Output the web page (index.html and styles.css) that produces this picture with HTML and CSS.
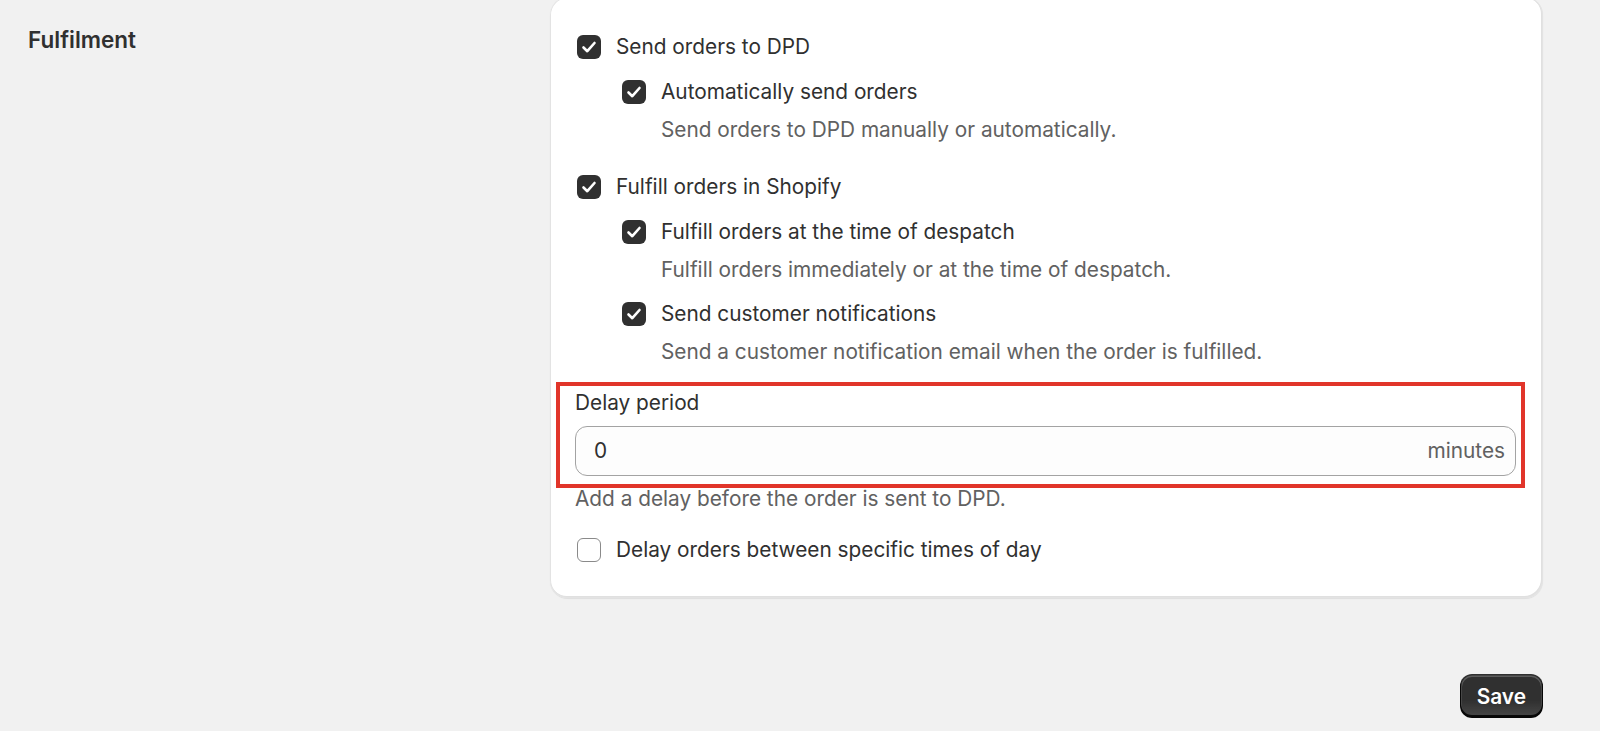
FILE: index.html
```html
<!DOCTYPE html>
<html lang="en">
<head>
  <meta charset="UTF-8">
  <title>Fulfilment settings</title>
  <link rel="stylesheet" href="styles.css">
</head>
<body>

  <div class="page">
    <div class="section">
      <h2 class="section-title">Fulfilment</h2>

      <div class="card">
        <div class="group">
          <label class="choice">
            <span class="box checked"><svg viewBox="0 0 24 24"><polyline points="6.5,12.5 10.3,16.2 17.5,8"/></svg></span>
            <span>Send orders to DPD</span>
          </label>
          <div class="children">
            <div class="option">
              <label class="choice">
                <span class="box checked"><svg viewBox="0 0 24 24"><polyline points="6.5,12.5 10.3,16.2 17.5,8"/></svg></span>
                <span>Automatically send orders</span>
              </label>
              <p class="help help-indent">Send orders to DPD manually or automatically.</p>
            </div>
          </div>
        </div>

        <div class="group group-next">
          <label class="choice">
            <span class="box checked"><svg viewBox="0 0 24 24"><polyline points="6.5,12.5 10.3,16.2 17.5,8"/></svg></span>
            <span>Fulfill orders in Shopify</span>
          </label>
          <div class="children">
            <div class="option">
              <label class="choice">
                <span class="box checked"><svg viewBox="0 0 24 24"><polyline points="6.5,12.5 10.3,16.2 17.5,8"/></svg></span>
                <span>Fulfill orders at the time of despatch</span>
              </label>
              <p class="help help-indent">Fulfill orders immediately or at the time of despatch.</p>
            </div>
            <div class="option">
              <label class="choice">
                <span class="box checked"><svg viewBox="0 0 24 24"><polyline points="6.5,12.5 10.3,16.2 17.5,8"/></svg></span>
                <span>Send customer notifications</span>
              </label>
              <p class="help help-indent">Send a customer notification email when the order is fulfilled.</p>
            </div>
          </div>
        </div>

        <div class="field">
          <div class="delay-field">
            <label class="field-label" for="delay">Delay period</label>
            <div class="input-wrap">
              <input id="delay" type="text" value="0">
              <span class="suffix">minutes</span>
            </div>
          </div>
          <p class="help">Add a delay before the order is sent to DPD.</p>
        </div>

        <label class="choice last-choice">
          <span class="box"></span>
          <span>Delay orders between specific times of day</span>
        </label>
      </div>
    </div>

    <div class="page-actions">
      <button class="btn-primary">Save</button>
    </div>
  </div>

</body>
</html>
```

FILE: styles.css
```css
body {
  margin: 0;
  background-color: #f1f1f1;
  color: #303030;
  font-family: Inter, 'Noto Sans', sans-serif;
  font-size: 20.8px;
  line-height: 30px;
}

.page {
  padding: 0 57px 0 28px;
}

.section {
  display: grid;
  grid-template-columns: 494px 1fr;
  column-gap: 28px;
  align-items: start;
}

.section-title {
  margin: 0;
  padding-top: 25px;
  font-size: 22.5px;
  font-weight: 600;
  line-height: 30px;
}

.card {
  margin-top: -3px;
  padding: 35px 27px 33px 25px;
  background-color: #fff;
  border-radius: 18px;
  box-shadow: inset 0 0 0 1px #e3e3e3, inset -1px -1px 0 1px #e0e0e0, 0 1px 1px rgba(0, 0, 0, 0.08);
}

.choice {
  display: flex;
  align-items: center;
  gap: 15px;
  cursor: pointer;
}

.box {
  flex: none;
  width: 24px;
  height: 24px;
  margin-left: 2px;
  box-sizing: border-box;
  border: 1.5px solid #8a8a8a;
  border-radius: 6px;
  background-color: #fff;
}

.box.checked {
  border: none;
  background-color: #303030;
}

.box svg {
  display: block;
  width: 24px;
  height: 24px;
  fill: none;
  stroke: #fff;
  stroke-width: 2.6;
  stroke-linecap: round;
  stroke-linejoin: round;
}

.children {
  margin-left: 45px;
}

.option {
  margin-top: 15px;
}

.option + .option {
  margin-top: 14px;
}

.help {
  margin: 8px 0 0;
  color: #616161;
}

/* help text under a checkbox lines up with its label */
.help-indent {
  padding-left: 41px;
}

.group-next {
  margin-top: 27px;
}

.field {
  margin-top: 21px;
}

.delay-field {
  position: relative;
}

/* red outline drawn around the delay field */
.delay-field::after {
  content: "";
  position: absolute;
  left: -19px;
  right: -9px;
  top: -6px;
  bottom: -12px;
  border: 4px solid #e1352a;
  pointer-events: none;
}

.field-label {
  display: block;
}

.input-wrap {
  display: flex;
  align-items: center;
  margin-top: 8px;
  height: 50px;
  box-sizing: border-box;
  padding: 0 10px 0 18px;
  background-color: #fdfdfd;
  border: 1px solid #a3a3a3;
  border-radius: 12px;
}

.input-wrap input {
  flex: 1;
  min-width: 0;
  border: none;
  outline: none;
  background: transparent;
  padding: 0;
  font: inherit;
  color: #303030;
}

.suffix {
  color: #616161;
}

.last-choice {
  margin-top: 21px;
}

.page-actions {
  display: flex;
  justify-content: flex-end;
  margin-top: 76px;
}

.btn-primary {
  height: 44px;
  padding: 0 17px;
  border: none;
  border-radius: 12px;
  background: linear-gradient(180deg, rgba(48, 48, 48, 0) 60%, rgba(255, 255, 255, 0.12) 100%), #303030;
  box-shadow: inset 0 -2px 0 1px rgba(0, 0, 0, 0.85), inset 0 0 0 1.5px #303030, inset 0 1px 0 2px #5c5c5c;
  color: #fff;
  font-family: Inter, 'Noto Sans', sans-serif;
  font-size: 20.8px;
  font-weight: 600;
  cursor: pointer;
}
```
